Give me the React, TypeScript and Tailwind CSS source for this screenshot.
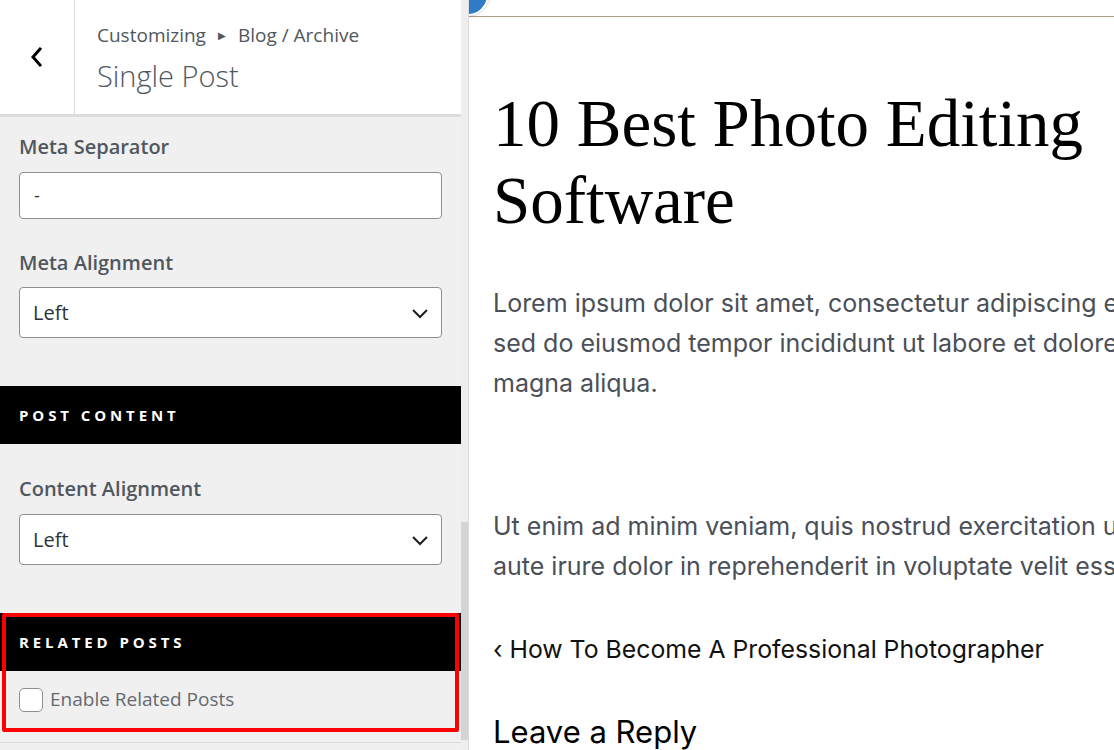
import React from "react";

function Chevron() {
  return (
    <svg width="18" height="18" viewBox="0 0 18 18" fill="none">
      <path d="M2 6 L9 13 L16 6" stroke="#1e1e1e" strokeWidth="2" />
    </svg>
  );
}

function Select({ value }: { value: string }) {
  return (
    <div className="flex h-[51px] items-center justify-between rounded-[4px] border border-[#8c8f94] bg-white pl-[13px] pr-[12px]">
      <span className="text-[20px] text-[#2c3338]">{value}</span>
      <Chevron />
    </div>
  );
}

export default function App() {
  const sans = { fontFamily: '"Open Sans", "Noto Sans", sans-serif' };
  return (
    <div className="flex h-[750px] w-[1114px] overflow-hidden bg-white">
      <aside className="flex h-full w-[469px] shrink-0 border-r border-[#dcdcde] bg-[#f0f0f1]" style={sans}>
        <div className="flex w-[461px] flex-col">
          <header className="flex h-[117px] shrink-0 border-b-[3px] border-[#dcdcde] bg-white">
            <div className="flex w-[75px] items-center justify-center border-r border-[#dcdcde]">
              <svg width="20" height="24" viewBox="0 0 20 24" fill="none">
                <path d="M13 4 L6 12 L13 20" stroke="#000" strokeWidth="3" strokeLinecap="square" />
              </svg>
            </div>
            <div className="flex flex-col pl-[22px] pt-[20px]">
              <div className="flex items-center text-[19px] leading-[30px] text-[#50575e]">
                <span>Customizing</span>
                <span className="mx-[12px] text-[10px]">▶</span>
                <span>Blog / Archive</span>
              </div>
              <div className="mt-[7px] text-[29px] font-light leading-[38px] text-[#50575e]">Single Post</div>
            </div>
          </header>

          <div className="flex flex-col px-[19px] pt-[16px]">
            <div className="text-[20px] font-semibold leading-[28px] text-[#50575e]">Meta Separator</div>
            <div className="mt-[11px] flex h-[47px] items-center rounded-[4px] border border-[#8c8f94] bg-white px-[14px] text-[18px] text-[#2c3338]">
              -
            </div>
            <div className="mt-[30px] text-[20px] font-semibold leading-[28px] text-[#50575e]">Meta Alignment</div>
            <div className="mt-[10px]">
              <Select value="Left" />
            </div>
          </div>

          <div className="mt-[48px] flex h-[58px] shrink-0 items-center bg-black px-[19px] text-[15px] font-bold tracking-[0.26em] text-white">
            POST CONTENT
          </div>

          <div className="flex flex-col px-[19px] pt-[31px]">
            <div className="text-[20px] font-semibold leading-[28px] text-[#50575e]">Content Alignment</div>
            <div className="mt-[11px]">
              <Select value="Left" />
            </div>
          </div>

          <div className="relative mt-[48px] shrink-0">
            <div className="flex h-[58px] items-center bg-black px-[19px] text-[15px] font-bold tracking-[0.26em] text-white">
              RELATED POSTS
            </div>
            <div className="flex h-[61px] items-center gap-[7px] px-[19px] pb-[4px]">
              <span className="h-[24px] w-[24px] rounded-[5px] border border-[#8c8f94] bg-white" />
              <span className="text-[19px] text-[#646970]">Enable Related Posts</span>
            </div>
            <div className="pointer-events-none absolute bottom-0 left-[2px] right-[2px] top-0 rounded-[2px] border-[4px] border-[#ff0000]" />
          </div>
          <div className="mt-[10px] border-t border-[#dcdcde]" />
        </div>
        <div className="flex w-[7px] flex-col bg-[#eeeeee] pt-[522px]">
          <div className="h-[218px] bg-[#d4d4d4]" />
        </div>
      </aside>

      <main className="relative flex-1 overflow-hidden">
        <div className="absolute left-[-22px] top-[-26px] h-[42px] w-[42px] rounded-full border-[2px] border-white bg-[#2f7bc8] shadow-[0_0_3px_rgba(0,0,0,0.25)]" />
        <div className="h-[17px] border-b border-[#b39e8a]" />
        <div className="whitespace-nowrap pl-[24px]">
          <h1
            className="mt-[68px] text-[67px] leading-[77px] text-black"
            style={{ fontFamily: '"Liberation Serif", "DejaVu Serif", serif' }}
          >
            <div>10 Best Photo Editing</div>
            <div>Software</div>
          </h1>
          <div className="mt-[44px] text-[25px] leading-[40px] text-[#4b4f58]" style={{ fontFamily: 'Inter, sans-serif' }}>
            <div>Lorem ipsum dolor sit amet, consectetur adipiscing elit,</div>
            <div>sed do eiusmod tempor incididunt ut labore et dolore</div>
            <div>magna aliqua.</div>
            <div className="mt-[103px]">Ut enim ad minim veniam, quis nostrud exercitation ullamco</div>
            <div>aute irure dolor in reprehenderit in voluptate velit esse</div>
          </div>
          <div className="mt-[43px] text-[24.8px] leading-[40px] text-[#111]" style={{ fontFamily: 'Inter, sans-serif' }}>
            ‹ How To Become A Professional Photographer
          </div>
          <div className="mt-[42px] text-[31px] leading-[42px] text-black" style={{ fontFamily: 'Inter, sans-serif' }}>
            Leave a Reply
          </div>
        </div>
      </main>
    </div>
  );
}
